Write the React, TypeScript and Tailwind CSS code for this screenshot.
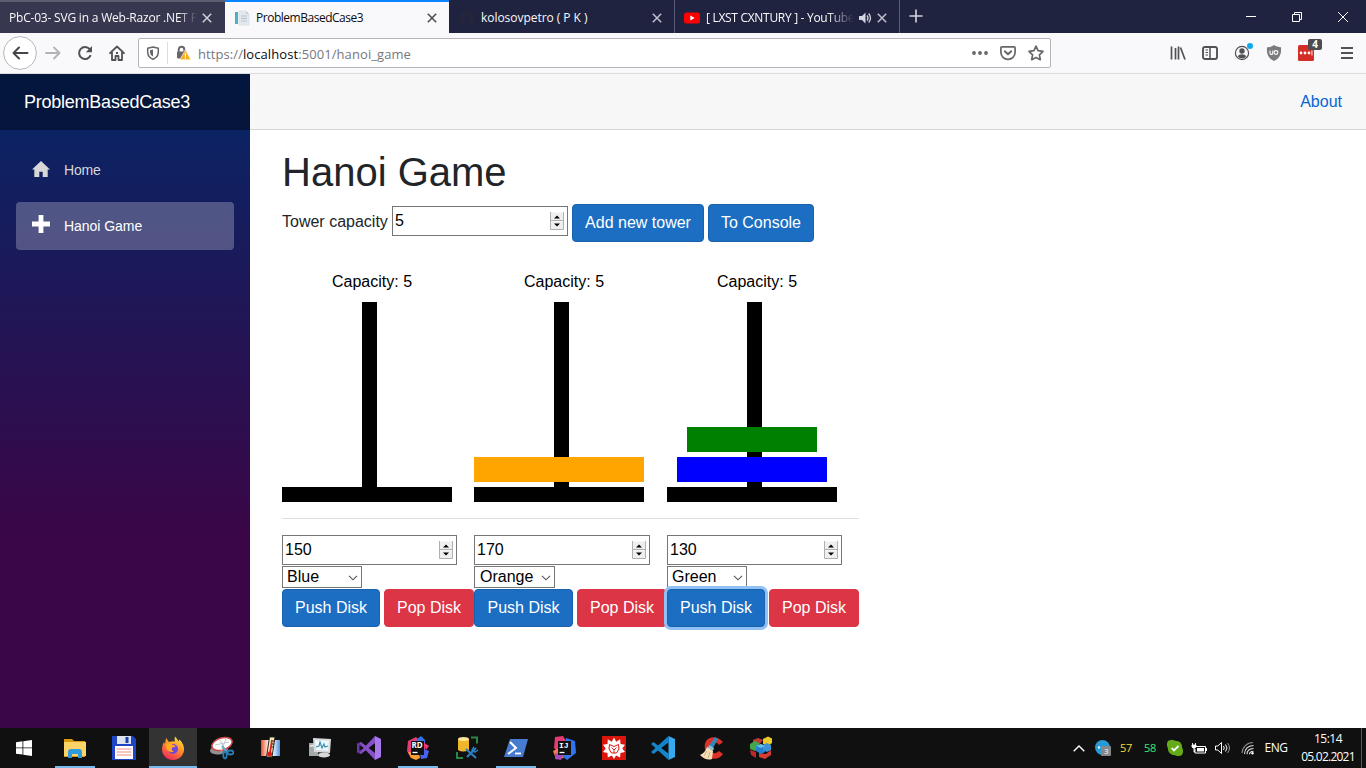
import type { ReactNode } from "react";

const UI = "font-['Open_Sans','Noto_Sans',sans-serif]";

function Close({ color, className = "" }: { color: string; className?: string }) {
  return (
    <svg width="10" height="10" viewBox="0 0 10 10" className={`shrink-0 ${className}`}>
      <path d="M.8 .8l8.4 8.4M9.2 .8L.8 9.2" stroke={color} strokeWidth="1.5" fill="none" />
    </svg>
  );
}

function TabStrip() {
  return (
    <div className={`flex h-[33px] bg-[#202340] text-[12px] leading-[34px] text-[#f9f9fa] ${UI}`}>
      <div className="flex h-[33px] w-[225px] items-center border-t-2 border-[#5c5d70] bg-[#37374f] pl-[9px]">
        <span className="w-[188px] whitespace-nowrap tracking-[-0.2px] [mask-image:linear-gradient(to_right,black_90%,transparent)]">
          PbC-03- SVG in a Web-Razor .NET P
        </span>
        <Close color="#d0d0d8" className="ml-[5px]" />
      </div>
      <div className="flex h-[33px] w-[224px] items-center border-t-2 border-[#0a84ff] bg-[#f9f9fb] text-[#0c0c0d]">
        <svg width="16" height="16" viewBox="0 0 16 16" className="ml-[9px] shrink-0">
          <path d="M1 2h3v12H1z" fill="#4fb0c4" />
          <path d="M5 1h7l3 3v11H5z" fill="#e3e9ef" stroke="#d3dbe2" strokeWidth=".7" />
          <path d="M12 1v3h3" fill="#c3cdd7" />
          <path d="M7 6h6M7 8.500h6M7 11h6" stroke="#b5c2ce" strokeWidth="1" />
        </svg>
        <span className="ml-[6px] w-[171px] tracking-[-0.48px]">ProblemBasedCase3</span>
        <Close color="#4a4a4f" />
      </div>
      <div className="flex h-[33px] w-[226px] items-center border-r border-[#59597a] pt-[2px]">
        <svg width="16" height="16" viewBox="0 0 16 16" className="ml-[10px] shrink-0">
          <path d="M8 1a7 7 0 0 0-2 13.700v-3c-2 .4-2.400-1-2.400-1M8 1a7 7 0 0 1 2 13.700v-3" fill="#24273a" />
        </svg>
        <span className="ml-[6px] w-[171px] whitespace-pre tracking-[-0.04px]">kolosovpetro ( P K )</span>
        <Close color="#c0c0ce" />
      </div>
      <div className="flex h-[33px] w-[225px] items-center border-r border-[#59597a] pt-[2px]">
        <svg width="16" height="16" viewBox="0 0 16 16" className="ml-[9px] shrink-0">
          <rect y="2.500" width="16" height="11" rx="2.500" fill="#f00" />
          <path d="M6.300 5.500v5L10.700 8z" fill="#fff" />
        </svg>
        <span className="ml-[6px] w-[148px] whitespace-nowrap tracking-[-0.3px] [mask-image:linear-gradient(to_right,black_82%,transparent)]">
          [ LXST CXNTURY ] - YouTube
        </span>
        <svg width="14" height="14" viewBox="0 0 14 14" className="ml-[4px] shrink-0">
          <path d="M1 5h3l3.500-3.500v11L4 9H1z" fill="#d5d5df" />
          <path d="M9 4.500q2 2.500 0 5M10.700 2.500q3.600 4.500 0 9" stroke="#d5d5df" strokeWidth="1.300" fill="none" />
        </svg>
        <Close color="#c0c0ce" className="ml-[5px]" />
      </div>
      <svg width="14" height="14" viewBox="0 0 14 14" className="ml-[9px] mt-[9px]">
        <path d="M7 .5v13M.5 7h13" stroke="#d5d5df" strokeWidth="1.600" />
      </svg>
      <div className="ml-auto flex w-[138px] items-center">
        <div className="flex w-[46px] justify-center">
          <svg width="10" height="10"><path d="M0 4.500h10" stroke="#fff" /></svg>
        </div>
        <div className="flex w-[46px] justify-center">
          <svg width="10" height="10" viewBox="0 0 10 10">
            <path d="M.5 2.500h7v7h-7zM2.500 2.500v-2h7v7h-2" stroke="#fff" fill="none" />
          </svg>
        </div>
        <div className="flex w-[46px] justify-center">
          <svg width="10" height="10" viewBox="0 0 10 10"><path d="M0 0l10 10M10 0L0 10" stroke="#fff" /></svg>
        </div>
      </div>
    </div>
  );
}

function Slot({ className, children }: { className: string; children: ReactNode }) {
  return <div className={`flex shrink-0 items-center justify-center ${className}`}>{children}</div>;
}

function Icon16({ children }: { children: ReactNode }) {
  return (
    <svg width="16" height="16" viewBox="0 0 16 16" fill="none" stroke="#515156" strokeWidth="2" className="overflow-visible">
      {children}
    </svg>
  );
}

function Toolbar() {
  return (
    <div className="flex h-[41px] items-center border-b border-[#dcdce0] bg-[#f9f9fb]">
      <div className="flex w-[138px] pl-[4px]">
        <Slot className="w-8">
          <svg width="34" height="34" viewBox="0 0 34 34" className="shrink-0">
            <circle cx="17" cy="17" r="16.400" fill="#fff" stroke="#b7b7bb" strokeWidth="1" />
            <path d="M24.500 17H11M16 11.500L10.500 17l5.500 5.500" fill="none" stroke="#45454a" strokeWidth="2" strokeLinecap="round" strokeLinejoin="round" />
          </svg>
        </Slot>
        <Slot className="ml-px w-8">
          <svg width="16" height="16" viewBox="0 0 16 16" fill="none" stroke="#b3b3b6" strokeWidth="1.800" strokeLinecap="round" strokeLinejoin="round">
            <path d="M1 8h13M9 2.500L14.500 8 9 13.500" />
          </svg>
        </Slot>
        <Slot className="w-8">
          <Icon16>
            <path d="M13.700 10.200A6 6 0 1 1 12.700 4.200" />
            <path d="M15 1v6.200H8.800z" fill="#515156" stroke="none" />
          </Icon16>
        </Slot>
        <Slot className="w-8">
          <Icon16>
            <path d="M1 8.200L8 1.500l7 6.700M3 7.500V15h3.500v-4h3v4H13V7.500" strokeWidth="1.800" strokeLinejoin="round" strokeLinecap="round" />
            <path d="M7 7h2v2H7z" fill="#515156" stroke="none" />
          </Icon16>
        </Slot>
      </div>
      <div className="flex h-[30px] w-[913px] items-center rounded-[2px] border border-[#b5b5ba] bg-white">
        <Slot className="w-[28px]">
          <svg width="14" height="14" viewBox="0 0 14 14">
            <path d="M7 1l5.300 1.300v3.900c0 3.500-2.300 5.800-5.300 7-3-1.200-5.300-3.500-5.300-7V2.300z" fill="none" stroke="#66666b" strokeWidth="1.500" strokeLinejoin="round" />
            <path d="M7 3.500v7C5.200 9.500 4 8 4 6V4.200z" fill="#66666b" />
          </svg>
        </Slot>
        <div className="h-[22px] w-px bg-[#dedee2]" />
        <Slot className="w-[30px]">
          <svg width="16" height="16" viewBox="0 0 16 16" className="overflow-visible">
            <path d="M3.700 7V4.500a2.800 2.800 0 0 1 5.600 0V7" fill="none" stroke="#66666b" strokeWidth="1.900" />
            <rect x="2" y="6.500" width="9" height="7" rx="1" fill="#66666b" />
            <path d="M10.400 4.800l5.600 10H4.800z" fill="#f7b01c" stroke="#fff" strokeWidth=".6" />
            <path d="M10.400 8.300v3.400M10.400 12.600v1.200" stroke="#fff" strokeWidth="1.200" />
          </svg>
        </Slot>
        <span className={`flex-1 pt-[2px] text-[13px] leading-[28px] tracking-[0.08px] text-[#77777c] ${UI}`}>
          https://<span className="text-[#0c0c0d]">localhost</span>:5001/hanoi_game
        </span>
        <Slot className="w-[28px]">
          <svg width="16" height="4" fill="#66666b"><circle cx="2" cy="2" r="1.900" /><circle cx="8" cy="2" r="1.900" /><circle cx="14" cy="2" r="1.900" /></svg>
        </Slot>
        <Slot className="w-[28px]">
          <Icon16>
            <path d="M1.900 1.800h12.200q1 0 1 1v4.500a7.100 7.100 0 0 1-14.200 0V2.800q0-1 1-1z" strokeWidth="1.700" stroke="#66666b" />
            <path d="M4.800 6.300L8 9.300l3.200-3" strokeWidth="1.900" stroke="#66666b" strokeLinecap="round" strokeLinejoin="round" />
          </Icon16>
        </Slot>
        <Slot className="w-[28px]">
          <Icon16>
            <path d="M8 1.200l2.100 4.500 4.900.7-3.600 3.400.9 4.900L8 12.400l-4.300 2.300.9-4.900L1 6.400l4.900-.7z" stroke="#66666b" strokeWidth="1.700" strokeLinejoin="round" />
          </Icon16>
        </Slot>
      </div>
      <div className="ml-auto flex w-[204px] items-center">
        <Slot className="w-8"><Icon16><path d="M1.500 1.500v13M5.500 3v11.500M8.500 1.500v13M10.500 2.500l4.500 12" strokeWidth="1.700" /></Icon16></Slot>
        <Slot className="w-8">
          <Icon16>
            <rect x="1" y="2" width="14" height="12" rx="2" strokeWidth="1.900" />
            <path d="M8 2v12" strokeWidth="1.500" />
            <path d="M3.500 5H6M3.500 7.500H6M3.500 10H6" strokeWidth="1" />
          </Icon16>
        </Slot>
        <Slot className="w-8">
          <Icon16>
            <circle cx="8" cy="8" r="6.600" strokeWidth="1.200" />
            <circle cx="8" cy="6" r="2.700" fill="#515156" stroke="none" />
            <path d="M3.600 11.200Q5 9.300 8 9.300t4.400 1.900A5.500 5.500 0 0 1 3.600 11.200z" fill="#515156" stroke="none" />
            <circle cx="16" cy="1" r="3" fill="#10a8ec" stroke="none" />
          </Icon16>
        </Slot>
        <Slot className="w-8">
          <svg width="16" height="16" viewBox="0 0 16 16">
            <path d="M8 0c2 1.500 4 2 7 2.200C15.500 9 14 13 8 16 2 13 .5 9 1 2.200 4 2 6 1.500 8 0z" fill="#7b7b7f" />
            <path d="M4 5.500v2.500a1.400 1.400 0 0 0 2.800 0V5.500" stroke="#fff" strokeWidth="1.100" fill="none" />
            <circle cx="10" cy="7.500" r="1.900" stroke="#fff" strokeWidth="1.100" fill="none" />
          </svg>
        </Slot>
        <Slot className="relative w-8">
          <svg width="16" height="16" viewBox="0 0 16 16">
            <rect width="16" height="16" rx="1.500" fill="#d32d27" />
            <g fill="#fff"><circle cx="3" cy="8" r="1.400" /><circle cx="7" cy="8" r="1.400" /><circle cx="11" cy="8" r="1.400" /><path d="M13.500 5.500h.9v5h-.9z" /></g>
          </svg>
          <span className={`absolute -top-[6px] right-0 h-[11px] w-[14px] rounded-[2px] bg-[#4d4d50] text-center text-[10px] font-bold leading-[11px] text-white ${UI}`}>4</span>
        </Slot>
        <div className="ml-[3px] h-[34px] w-px bg-[#d9d9dd]" />
        <Slot className="ml-px w-[42px]"><svg width="12" height="12"><path d="M0 1h12M0 6h12M0 11h12" stroke="#515156" strokeWidth="2" /></svg></Slot>
      </div>
    </div>
  );
}

function NumberField({ value, className }: { value: string; className: string }) {
  return (
    <div className={`flex h-[30px] shrink-0 items-center justify-between border border-[#767676] bg-white pl-[2px] pr-[3px] text-black ${className}`}>
      <span className="leading-[28px]">{value}</span>
      <svg width="14" height="18" viewBox="0 0 14 18">
        <rect x=".5" y=".5" width="13" height="8" fill="#efefef" />
        <rect x=".5" y="9.500" width="13" height="8" fill="#efefef" />
        <path d="M.5 0v17.500h13V0M.5 8.500h13" fill="none" stroke="#b0b0b0" />
        <path d="M4 6.500L7 3.500l3 3zM4 11.500l3 3 3-3z" fill="#000" />
      </svg>
    </div>
  );
}

function Button({ children, className }: { children: ReactNode; className: string }) {
  return (
    <button className={`h-[38px] shrink-0 whitespace-nowrap rounded-[4px] border text-[16px] leading-[36px] text-white ${className}`}>
      {children}
    </button>
  );
}

const BLUE = "border-[#1861ac] bg-[#1b6ec2]";
const RED = "border-[#dc3545] bg-[#dc3545]";

type Disk = { size: number; color: string };
type TowerData = { disks: Disk[]; value: string; color: string; push: string; select: string; width: string };

const towers: TowerData[] = [
  { disks: [], value: "150", color: "Blue", push: "w-[98px]", select: "w-[80px] pl-[4px]", width: "w-[175px]" },
  { disks: [{ size: 170, color: "orange" }], value: "170", color: "Orange", push: "w-[99px]", select: "w-[81px] pl-[5px]", width: "w-[176px]" },
  {
    disks: [{ size: 150, color: "blue" }, { size: 130, color: "green" }],
    value: "130",
    color: "Green",
    push: "w-[98px] shadow-[0_0_0_3px_#91c1f5]",
    select: "w-[80px] pl-[4px]",
    width: "w-[175px]",
  },
];

function Tower({ disks }: { disks: Disk[] }) {
  return (
    <div className="w-[170px]">
      <div className="h-[30px] pl-[50px] leading-[20px] text-black">Capacity: 5</div>
      <svg width="170" height="200" viewBox="0 0 170 200" shapeRendering="crispEdges" className="block">
        <rect x="80" width="15" height="200" />
        <rect y="185" width="170" height="15" />
        {disks.map((d, i) => (
          <rect key={i} x={(170 - d.size) / 2} y={155 - i * 30} width={d.size} height="25" fill={d.color} />
        ))}
      </svg>
    </div>
  );
}

function Controls({ t, focused }: { t: TowerData; focused: boolean }) {
  return (
    <div className="min-w-0">
      <NumberField value={t.value} className={t.width} />
      <div className={`mt-px flex h-[22px] items-center justify-between border border-[#767676] bg-white pr-[3px] leading-[20px] text-black ${t.select}`}>
        <span>{t.color}</span>
        <svg width="10" height="6" viewBox="0 0 10 6" className="mt-[2px]">
          <path d="M1 .8l4 4 4-4" fill="none" stroke="#55555a" strokeWidth="1.100" />
        </svg>
      </div>
      <div className="mt-px flex gap-[4px]">
        <Button className={`${BLUE} ${t.push} ${focused ? "relative" : ""}`}>Push Disk</Button>
        <Button className={`${RED} w-[90px]`}>Pop Disk</Button>
      </div>
    </div>
  );
}

function Sidebar() {
  return (
    <aside className="w-[250px] shrink-0 bg-[linear-gradient(180deg,#052767_0%,#3a0647_70%)]">
      <div className="h-[56px] bg-black/40 pl-[24px] text-[18px] leading-[56px] tracking-[-0.24px] text-white">ProblemBasedCase3</div>
      <nav className="px-[16px] pt-[16px] text-[14px]">
        <div className="flex h-[48px] items-center pl-[16px] text-[#d7d7d7]">
          <svg width="18" height="18" viewBox="0 0 18 18" className="-mt-[3px]">
            <path d="M9 1L0 9.500h2.300V17h5v-5.200h3.400V17h5V9.500H18z" fill="#d7d7d7" />
          </svg>
          <span className="ml-[14px] tracking-[-0.2px]">Home</span>
        </div>
        <div className="mt-[8px] flex h-[48px] items-center rounded-[4px] bg-white/25 pl-[16px] text-white">
          <svg width="18" height="18" viewBox="0 0 18 18" className="-mt-[4px]">
            <path d="M6.600 0h4.800v6.600H18v4.800h-6.600V18H6.600v-6.600H0V6.600h6.600z" fill="#fff" />
          </svg>
          <span className="ml-[14px] tracking-[-0.04px]">Hanoi Game</span>
        </div>
      </nav>
    </aside>
  );
}

function Page() {
  return (
    <div className="flex h-[654px] bg-white font-['Liberation_Sans',Arial,sans-serif] text-[16px] text-[#212529]">
      <Sidebar />
      <main className="flex-1">
        <div className="h-[56px] border-b border-[#d6d5d5] bg-[#f7f7f7] pr-[24px] text-right leading-[55px] text-[#0366d6]">About</div>
        <div className="pl-[32px] pt-[18px]">
          <h1 className="text-[40px] leading-[48px]">Hanoi Game</h1>
          <div className="mt-[8px] flex h-[38px]">
            <span className="w-[110px] leading-[35px]">Tower capacity</span>
            <NumberField value="5" className="mt-[2px] w-[176px]" />
            <Button className={`${BLUE} ml-[4px] w-[132px]`}>Add new tower</Button>
            <Button className={`${BLUE} ml-[4px] w-[106px]`}>To Console</Button>
          </div>
          <div className="mt-[30px] grid grid-cols-[192px_193px_192px]">
            {towers.map((t) => <Tower key={t.value} disks={t.disks} />)}
          </div>
          <div className="mt-[16px] h-px w-[577px] bg-[#e0e0e0]" />
          <div className="mt-[16px] grid grid-cols-[192px_193px_192px]">
            {towers.map((t, i) => <Controls key={t.value} t={t} focused={i === 2} />)}
          </div>
        </div>
      </main>
    </div>
  );
}

const apps: { icon: ReactNode; active?: boolean; open?: boolean }[] = [
  {
    open: true,
    icon: (
      <>
        <path d="M1 3h8l2 2h11v16H1z" fill="#d8980f" />
        <path d="M1 6h22v14H1z" fill="#fbd366" />
        <path d="M5 22v-6q0-3 3-3h8q3 0 3 3v6h-4v-4H9v4z" fill="#2d9bdc" />
      </>
    ),
  },
  {
    icon: (
      <>
        <path d="M0 0h21l3 3v21H0z" fill="#1d45c4" />
        <path d="M5 0h14v8H5z" fill="#dce3ec" /><path d="M13.500 1h3v6h-3z" fill="#193fae" />
        <path d="M3 10h18v13H3z" fill="#fff" />
        <path d="M4.500 13h15M4.500 16h15M4.500 19h15" stroke="#ef8c86" strokeWidth="1.200" />
      </>
    ),
  },
  {
    open: true,
    active: true,
    icon: (
      <>
        <defs><linearGradient id="fox" x1=".8" x2=".3" y2="1"><stop stopColor="#ffe83c" /><stop offset=".45" stopColor="#ff9426" /><stop offset="1" stopColor="#f4265e" /></linearGradient></defs>
        <path d="M14 .5q2 2 3.500 5l1-2q5 5 4.500 11C22 20 18 24 12 24S1 19.500 1 13q0-4 2-7l1 2 1-6 3 4q3-1 6-.5-1-2 0-5z" fill="url(#fox)" />
        <circle cx="12" cy="13" r="5" fill="#7445dc" />
        <path d="M5 8q4-2 7 1l3 1q-2 1.500-4 1.500-1 3 2 4-5 2-7.500-3z" fill="#ffab28" />
      </>
    ),
  },
  {
    icon: (
      <>
        <ellipse cx="9" cy="14" rx="9" ry="4.500" fill="#8f9295" transform="rotate(-6 9 14)" />
        <ellipse cx="12" cy="8" rx="10.500" ry="6" fill="#fff" stroke="#d34747" strokeWidth="1.500" transform="rotate(-18 12 8)" />
        <path d="M5 9l14-3M10 4l5 10M16 3l-5 12" stroke="#c0c6cc" />
        <path d="M12 10l5 6" stroke="#6ea6c8" strokeWidth="2" />
        <g fill="none" stroke="#2a7fb4" strokeWidth="1.800"><ellipse cx="15" cy="19" rx="1.700" ry="3.500" /><ellipse cx="20.500" cy="16.500" rx="3" ry="2" /></g>
      </>
    ),
  },
  {
    icon: (
      <>
        <defs><linearGradient id="heat" x2="1"><stop stopColor="#e85128" /><stop offset=".4" stopColor="#fff" /><stop offset=".6" stopColor="#fff" /><stop offset="1" stopColor="#4e91e0" /></linearGradient></defs>
        <rect x="2" y="4" width="19" height="16" fill="url(#heat)" />
        <path d="M10.500 1h5.500l-3 20H7.500z" fill="#f5efb6" stroke="#222" strokeWidth="1" />
        <path d="M13 4l-2 13" stroke="#df1b18" strokeWidth="1.700" /><circle cx="10.500" cy="18" r="2.500" fill="#df1b18" />
        <path d="M13.500 5h2M13 8h2M12.500 11h2" stroke="#222" />
      </>
    ),
  },
  {
    icon: (
      <>
        <path d="M1 7h9v13H1z" fill="#a3a8aa" /><path d="M2 9l7-1v2l-7 1z" fill="#e2e2e2" />
        <path d="M5 2l18 1-1 14-16-1z" fill="#d8dadb" /><path d="M7 4l14 .7-.8 10L8 14z" fill="#eef7fb" />
        <path d="M8 11l3-1 1-4 2 6 2-4 1 3 3-1" stroke="#328caa" strokeWidth="1.100" fill="none" />
        <ellipse cx="16" cy="19" rx="6" ry="2.500" fill="#d6d7d7" />
      </>
    ),
  },
  {
    icon: (
      <>
        <path d="M18 0l6 3v18l-6 3z" fill="#a978ed" />
        <path d="M18 0L1.500 17.500 0 16V8l1.500-1.500L18 24v-7L4 6 0 8v8l4 2L18 7z" fill="#8650c9" />
        <path d="M0 8l2-1 2.500 2v6L2 17l-2-1z" fill="#6b37a5" /><path d="M2.500 9v6l3-3z" fill="#101010" />
      </>
    ),
  },
  {
    open: true,
    icon: (
      <>
        <path d="M2 5l8-4 4 4L5 22l-4-7z" fill="#e53d72" /><path d="M10 4l5-4 4 4v5z" fill="#2f75e5" /><path d="M15 5l4 2v8l-4 4z" fill="#e5366f" /><path d="M18 7l5 3-3 4z" fill="#f3357e" /><path d="M18 13l5 2-2 7-6 1-1-5z" fill="#4a63ee" />
        <path d="M2 16l3 6 5 2 4-2-1-5z" fill="#fc9d31" />
        <path d="M5 5h13v14H5z" fill="#111" />
        <text x="5.500" y="12" fontSize="8" fontWeight="bold" fill="#fff" fontFamily="Open Sans">RD</text><path d="M6.500 16.500h5" stroke="#fff" strokeWidth="1.300" />
      </>
    ),
  },
  {
    icon: (
      <>
        <path d="M16 1.500h6v6M2 16v6h6" fill="none" stroke="#2c8746" strokeWidth="2" />
        <path d="M3 3v11q5 3 11 0V3z" fill="#efb62c" /><ellipse cx="8.500" cy="3" rx="5.500" ry="2" fill="#ffe694" />
        <path d="M11 13l10 9M21 12l-9 9" stroke="#2b7fbd" strokeWidth="2.200" /><path d="M19 11l-2 3 3 2 3-2" fill="none" stroke="#2b7fbd" strokeWidth="1.500" />
      </>
    ),
  },
  {
    open: true,
    icon: (
      <>
        <path d="M6 3h18l-5 18H0z" fill="#477bd2" />
        <path d="M6 6l6 6-8 6" fill="none" stroke="#fff" strokeWidth="2" /><path d="M11 17.500h6" stroke="#fff" strokeWidth="1.800" />
      </>
    ),
  },
  {
    icon: (
      <>
        <path d="M2 1l8-1 3 5-7 12-5-5z" fill="#e43b70" /><path d="M0 15l6-3 5 10-8 1z" fill="#f17b57" /><path d="M13 2l9 3 1 12-9 7-6-5z" fill="#3274ef" /><path d="M2 17l8 2-2 5-6-1z" fill="#a64ab8" />
        <path d="M5 5h13v14H5z" fill="#111" />
        <text x="6" y="12" fontSize="8" fontWeight="bold" fill="#fff" fontFamily="Liberation Mono">IJ</text><path d="M6.500 16.500h5" stroke="#fff" strokeWidth="1.300" />
      </>
    ),
  },
  {
    icon: (
      <>
        <rect width="24" height="24" fill="#db140c" />
        <path d="M12 1.500l2.200 4.300 4-2.500.3 4.700 4.500.7-2.700 3.800 2.700 3.500-4.600 1-.3 4.500-4.100-2-2 3.500-2.200-3.500-4 2-.3-4.500-4.500-1 2.700-3.500L1 8.700 5.500 8l.3-4.700 4 2.500z" fill="#fff" />
        <path d="M7.500 8.500L12 10.500l4.500-2 .5 4.500-2.500 4h-5L7 13z" fill="none" stroke="#db140c" strokeWidth="1" /><path d="M9.500 11.500l2.500 2.500 2.500-2.500M12 14v3" fill="none" stroke="#db140c" strokeWidth=".9" />
      </>
    ),
  },
  {
    icon: (
      <>
        <path d="M17.500 0L24 3v18l-6.500 3z" fill="#36a9ef" /><path d="M18 6L2.500 18 0 16 17.500 0z" fill="#1184cc" /><path d="M18 18L2.500 6 0 8l17.500 16z" fill="#1684c7" />
      </>
    ),
  },
  {
    icon: (
      <>
        <path d="M23 6C14-3 3 2 5 13s12 13 18 5l-4-3c-4 4-8 2-9-3-1-6 6-8 9-3z" fill="#dc3126" />
        <path d="M15 1l3 2-5 9-4-2z" fill="#3188bd" /><path d="M9 9l5 3-1 3-5-3z" fill="#8ac0de" />
        <path d="M7 11l6 4-1 8q-6 2-12-4 5-2 7-8z" fill="#f4dfb6" /><path d="M7 15l-3 5M10 16l-2 6" stroke="#d1ad79" />
      </>
    ),
  },
  {
    icon: (
      <>
        <path d="M14 3l5-2.500 4 2v4.500l-4 3-5-2z" fill="#e9ca28" /><path d="M4 4l5-2 5 2-4 5-6-1z" fill="#c43a35" /><path d="M1 8l5-3 4 2v6l-4 2-5-2z" fill="#43a64c" />
        <path d="M1 14l6 2v6l-5-3z" fill="#bc2827" /><path d="M10 17l7 1 5-4v5l-6 4-6-2z" fill="#d83b36" />
        <path d="M7 10l5-2 4 2v6l-4 2-5-3z" fill="#2680cd" /><path d="M14 9l4-2 4 2v5l-4 2-4-2z" fill="#3d92d6" /><path d="M7 10l5-2 4 2-4 2z" fill="#67bcef" />
      </>
    ),
  },
];

function Taskbar() {
  return (
    <div className={`flex h-[40px] bg-[#101010] text-white ${UI}`}>
      <Slot className="w-[48px]">
        <svg width="16" height="16" viewBox="0 0 16 16" fill="#fff"><path d="M0 2.200L6.500 1.300v6.200H0zM7.300 1.200L16 0v7.500H7.300zM0 8.300h6.500v6.300L0 13.700zM7.300 8.300H16V16l-8.700-1.200z" /></svg>
      </Slot>
      <div className="ml-[3px] flex gap-px">
        {apps.map((app, i) => (
          <div key={i} className={`flex h-[40px] w-[48px] flex-col items-center justify-between pt-[8px] ${app.active ? "bg-[#333]" : ""}`}>
            <svg width="24" height="24" viewBox="0 0 24 24" className="shrink-0">{app.icon}</svg>
            {app.open && <div className={`h-[2px] bg-[#76b9ed] ${app.active ? "w-[48px]" : "w-[40px]"}`} />}
          </div>
        ))}
      </div>
      <div className="ml-auto flex w-[300px] items-center">
        <Slot className="ml-px w-6"><svg width="12" height="7"><path d="M.7 6.300L6 1l5.300 5.300" fill="none" stroke="#fff" strokeWidth="1.400" /></svg></Slot>
        <Slot className="w-6">
          <svg width="16" height="16" viewBox="0 0 16 16"><circle cx="7.500" cy="7.500" r="7.500" fill="#299bd4" /><circle cx="4" cy="7.500" r="1.200" fill="#dff4ff" /><rect x="6" y="6" width="10" height="10" rx="1" fill="#85888b" /><text x="9" y="14" fontSize="8" fill="#fff" fontFamily="Open Sans">3</text></svg>
        </Slot>
        <Slot className="-ml-px w-6 text-[11px] tracking-[-0.3px] text-[#f0df35]">57</Slot>
        <Slot className="w-6 text-[11px] tracking-[-0.3px] text-[#39e878]">58</Slot>
        <Slot className="ml-px w-6">
          <svg width="16" height="16" viewBox="0 0 16 16"><path d="M1 1q4-2 7-.2Q15 .5 15.200 8 17 11 15 15q-4 2-7 .2Q1 15 .8 8-1 4 1 1z" fill="#65aa18" /><path d="M4.700 8l2.300 2.400 4.500-4.600" fill="none" stroke="#fff" strokeWidth="1.800" /></svg>
        </Slot>
        <Slot className="w-6">
          <svg width="16" height="13" viewBox="0 0 16 13"><path d="M5 4.500h9.500v6.500H4V7" fill="none" stroke="#fff" /><path d="M6 6h7v3.500H6zM15 6h1v3h-1z" fill="#fff" /><path d="M1 3h4v2L3.800 6H2.200L1 5zM1.500 1v2M4.500 1v2M3 6v4h1" fill="#fff" stroke="#fff" strokeWidth=".9" /></svg>
        </Slot>
        <Slot className="w-6">
          <svg width="16" height="14" viewBox="0 0 16 14" fill="none" stroke="#fff"><path d="M.5 5h2.300L6.500 1.500v11L2.800 9H.5z" /><path d="M8.500 5q1.500 2 0 4M10.500 3.500q3 3.500 0 7" /><path d="M12.500 2q4 5 0 10" stroke="#999" /></svg>
        </Slot>
        <Slot className="ml-px w-6">
          <svg width="14" height="14" viewBox="0 0 14 14" fill="none" stroke="#e2e2e2" strokeWidth="1.100"><path d="M1 12A11 11 0 0 1 12 1.500" stroke="#8a8a8a" /><path d="M3.500 13Q4 5 12.500 4.500M6 13.200Q6 8 12.500 7.500M8.500 13.200Q8.500 10.500 12.500 10.300" /><circle cx="11.500" cy="12.300" r="1.200" fill="#fff" stroke="none" /></svg>
        </Slot>
        <Slot className="w-[32px] text-[12px] tracking-[-0.4px]">ENG</Slot>
        <div className="ml-[4px] w-[64px] text-center text-[12px] leading-[18px] tracking-[-0.75px]">
          <div className="tracking-[-0.5px]">15:14</div>
          <div>05.02.2021</div>
        </div>
        <div className="ml-px h-[40px] w-px bg-[#55555a]" />
      </div>
    </div>
  );
}

export default function App() {
  return (
    <div className="h-[768px] w-[1366px] overflow-hidden">
      <TabStrip />
      <Toolbar />
      <Page />
      <Taskbar />
    </div>
  );
}
